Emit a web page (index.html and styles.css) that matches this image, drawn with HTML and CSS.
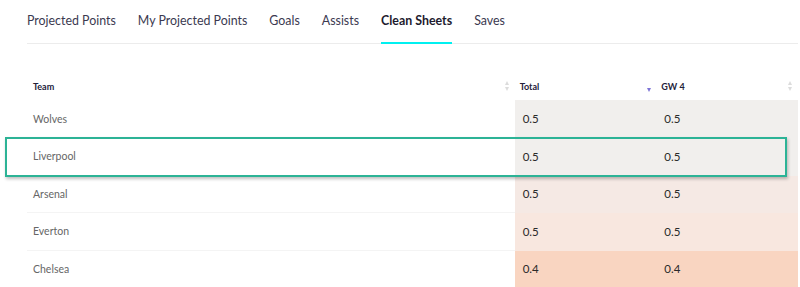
FILE: index.html
```html
<!DOCTYPE html>
<html lang="en">
  <head>
    <meta charset="UTF-8" />
    <title>Clean Sheets</title>
    <link rel="stylesheet" href="styles.css">
  </head>
  <body>
    <div class="page">
      <nav class="tabs">
        <a class="tab">Projected Points</a>
        <a class="tab">My Projected Points</a>
        <a class="tab">Goals</a>
        <a class="tab">Assists</a>
        <a class="tab tab--active">Clean Sheets</a>
        <a class="tab">Saves</a>
      </nav>

      <div class="table__wrap">
        <table class="stats">
          <thead>
            <tr>
              <th class="col-team">Team <span class="sort"></span></th>
              <th class="col-num">Total <span class="sort sort--desc"></span></th>
              <th class="col-num">GW 4 <span class="sort"></span></th>
            </tr>
          </thead>
          <tbody>
            <tr class="heat-1">
              <td>Wolves</td><td>0.5</td><td>0.5</td>
            </tr>
            <tr class="heat-1 row--picked">
              <td>Liverpool</td><td>0.5</td><td>0.5</td>
            </tr>
            <tr class="heat-2">
              <td>Arsenal</td><td>0.5</td><td>0.5</td>
            </tr>
            <tr class="heat-3">
              <td>Everton</td><td>0.5</td><td>0.5</td>
            </tr>
            <tr class="heat-4">
              <td>Chelsea</td><td>0.4</td><td>0.4</td>
            </tr>
          </tbody>
        </table>
        <!-- highlight around the selected row -->
        <div class="picked__box"></div>
      </div>
    </div>
  </body>
</html>
```

FILE: styles.css
```css
* {
  margin: 0;
  padding: 0;
  box-sizing: border-box;
}

body {
  font-family: "Lato", "Noto Sans", sans-serif;
  background: #ffffff;
  color: #333;
  overflow: hidden;
}

.page {
  padding: 0 2px 0 27px;
}

.tabs {
  display: flex;
  gap: 22px;
  height: 44px;
  border-bottom: 1px solid #ececec;
}

.tab {
  display: block;
  height: 44px;
  padding-top: 13px;
  font-size: 12.4px;
  color: #3b3950;
  cursor: pointer;
}

.tab--active {
  font-weight: bold;
  color: #1d1b2e;
  border-bottom: 2px solid #00f0f0;
  margin-bottom: -1px;
}

.table__wrap {
  position: relative;
  margin-top: 28px;
}

.stats {
  width: 100%;
  border-collapse: collapse;
}

.stats th {
  height: 28px;
  font-size: 9px;
  font-weight: bold;
  color: #23213a;
  text-align: left;
  position: relative;
}

.col-team {
  width: 489px;
  padding-left: 6px;
}

.col-num {
  width: 142px;
  padding-left: 5px;
}

.sort {
  position: absolute;
  right: 5px;
  top: 9px;
  width: 5px;
  height: 10px;
}

.sort::before,
.sort::after {
  content: "";
  position: absolute;
  left: 0;
  border-left: 2.5px solid transparent;
  border-right: 2.5px solid transparent;
}

.sort::before {
  top: 0;
  border-bottom: 4px solid #dcdcdc;
}

.sort::after {
  bottom: 0;
  border-top: 4px solid #dcdcdc;
}

.sort--desc {
  right: 4px;
}

.sort--desc::before {
  display: none;
}

.sort--desc::after {
  bottom: -1px;
  border-top-color: #7e74d6;
}

.stats td {
  height: 37.5px;
  font-size: 11.5px;
  color: #2a2a2a;
  padding-left: 8px;
  border-bottom: 1px solid #f4f4f4;
}

.stats td:first-child {
  font-size: 10.5px;
  color: #666666;
  padding-left: 6px;
}

.heat-1 td + td {
  background: #f1efed;
  border-bottom-color: #f1efed;
}

.heat-2 td + td {
  background: #f5e9e4;
  border-bottom-color: #f5e9e4;
}

.heat-3 td + td {
  background: #f8e7df;
  border-bottom-color: #f8e7df;
}

.heat-4 td + td {
  background: #f9d5c1;
  border-bottom-color: #f9d5c1;
}

.picked__box {
  position: absolute;
  left: -22px;
  top: 65px;
  width: 782px;
  height: 40px;
  border: 2px solid #2cb396;
  box-shadow: 1px 2px 3px rgba(0, 0, 0, 0.25);
  pointer-events: none;
}
```
